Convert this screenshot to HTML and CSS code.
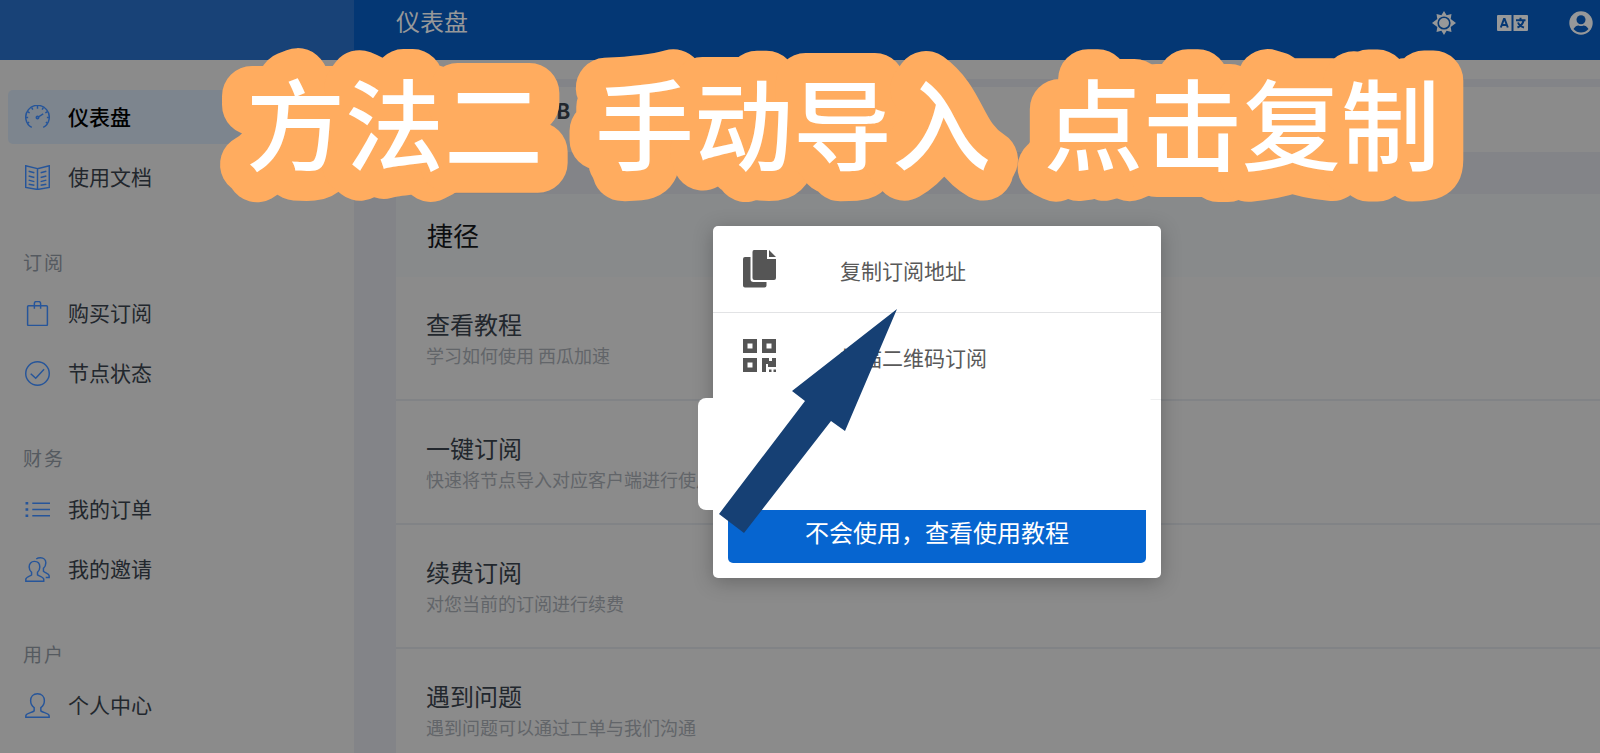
FILE: index.html
```html
<!DOCTYPE html>
<html lang="zh-CN">
<head>
<meta charset="utf-8">
<title>仪表盘</title>
<link rel="stylesheet" href="styles.css">
</head>
<body>
<div class="app">
  <aside class="sidebar">
    <div class="brand"></div>
    <nav class="nav">
      <a class="nav-item active" href="#"><svg class="nav-icon" viewBox="0 0 24 24"><path d="M6.500 21.500A11.300 11.300 0 1 1 17.500 21.500"/><path d="M12 12l5.500-3.500M12 1v2.500M6.500 2.500l1 2M17.500 2.500l-1 2M2.500 6.500l2 1M21.500 6.500l-2 1M1 12h2M23 12h-2M2.500 17.500l1.500-1M21.500 17.500l-1.500-1"/><circle cx="12" cy="12" r="1.200"/></svg><span>仪表盘</span></a>
      <a class="nav-item" href="#"><svg class="nav-icon" viewBox="0 0 24 24"><path d="M12 3.500L.7.700V21.500L12 23.500 23.300 21.500V.7zM12 3.500v20M3.500 6l5.500 1.500M3.500 10.500L9 12M3.500 14.500L9 16M3.500 18.500l5.500 1M20.500 6L15 7.500M20.500 10.500L15 12M20.500 14.500L15 16M20.500 18.500l-5.500 1"/></svg><span>使用文档</span></a>
      <h2 class="nav-heading">订阅</h2>
      <a class="nav-item" href="#"><svg class="nav-icon" viewBox="0 0 24 24"><path d="M3.500 4.500h17q1 0 1 1v17q0 1-1 1h-17q-1 0-1-1v-17q0-1 1-1zM9 7.500V2.500q0-2 2-2h2q2 0 2 2v5"/></svg><span>购买订阅</span></a>
      <a class="nav-item" href="#"><svg class="nav-icon" viewBox="0 0 24 24"><circle cx="12" cy="12" r="11.300"/><path d="M5.500 12.200l4.800 4.300 8-8.500"/></svg><span>节点状态</span></a>
      <h2 class="nav-heading">财务</h2>
      <a class="nav-item" href="#"><svg class="nav-icon" viewBox="0 0 24 24"><path d="M7 6h17M7 12h17M7 18h17"/><path class="solid" d="M.5 4.700h2.600v2.600H.5zM.5 10.700h2.600v2.600H.5zM.5 16.700h2.600v2.600H.5z"/></svg><span>我的订单</span></a>
      <a class="nav-item" href="#"><svg class="nav-icon" viewBox="0 0 24 24"><path d="M9 4.200c3.200 0 5.200 2.200 5.200 5.300 0 2.200-.9 4-2.200 5.200v2.500c1.500 1.200 6 2 6 4.200v1.900H.8v-1.900c0-2.200 4.200-3 5.500-4.200v-2.500C5 13.500 4 11.700 4 9.500c0-3.100 1.900-5.300 5-5.300z"/><path d="M10.800 1.900C12 1 13.200.7 14.800.7c3.200 0 5.200 2.100 5.200 4.900 0 2.300-.9 4.200-2.300 5.300v2.700c1.300 1.600 5.500 2.400 5.500 4.500v1.500h-3.300"/></svg><span>我的邀请</span></a>
      <h2 class="nav-heading">用户</h2>
      <a class="nav-item" href="#"><svg class="nav-icon" viewBox="0 0 24 24"><path d="M12 .7c4 0 6.600 2.700 6.600 6.600 0 2.800-1.200 5.300-3.400 6.700v3.200c2 1.800 8 2.200 8 4.800v1.300H.8V22c0-2.600 6-3 8-4.800V14c-2.200-1.400-3.400-3.900-3.400-6.700C5.400 3.400 8 .7 12 .7z"/></svg><span>个人中心</span></a>
    </nav>
  </aside>
  <div class="page">
    <header class="topbar">
      <h1 class="page-title">仪表盘</h1>
      <div class="tools">
        <button class="tool" aria-label="主题"><svg width="24" height="24" viewBox="0 0 24 24"><path fill="currentColor" d="M12 0l2.600 4.300L19.500 3l-.8 5L24 12l-5.300 4 .8 5-4.900-1.300L12 24l-2.600-4.300L4.500 21l.8-5L0 12l5.300-4-.8-5 4.900 1.300z"/><circle cx="12" cy="12" r="5.800" fill="currentColor" stroke="#043774" stroke-width="1.600"/></svg></button>
        <button class="tool" aria-label="语言"><svg width="31" height="16" viewBox="0 0 31 16"><path fill="currentColor" d="M1 0h13.500v16H1Q0 16 0 15V1Q0 0 1 0zM16.500 0H30q1 0 1 1v14q0 1-1 1H16.500z"/><path fill="none" stroke="#043774" stroke-width="2" d="M3.800 12.500L7 4h.6l3.200 8.500M5 10h4.800M19 5.200h9.500M23.500 2.800v2.500M20.500 12.500c3.500-1.500 5.500-4 6-7M21 7.500c1 2.500 3 4.300 6 5"/></svg></button>
        <button class="tool" aria-label="账户"><svg width="24" height="24" viewBox="0 0 24 24"><circle cx="12" cy="12" r="11.700" fill="currentColor"/><circle cx="12" cy="8.800" r="4.500" fill="#043774"/><path fill="#043774" d="M4.500 18c1.500-2.500 3.300-3.500 5-3.500 1.600.7 3.400.7 5 0 1.700 0 3.500 1 5 3.500-4 4.700-11 4.700-15 0z"/></svg></button>
      </div>
    </header>
    <div class="notice-strip"></div>
    <main class="content">
      <section class="usage"><strong>B</strong></section>
      <section class="card">
        <h2 class="card-title">捷径</h2>
        <a class="row" href="#"><span class="row-title">查看教程</span><span class="row-text">学习如何使用 西瓜加速</span></a>
        <a class="row" href="#"><span class="row-title">一键订阅</span><span class="row-text">快速将节点导入对应客户端进行使用</span></a>
        <a class="row" href="#"><span class="row-title">续费订阅</span><span class="row-text">对您当前的订阅进行续费</span></a>
        <a class="row" href="#"><span class="row-title">遇到问题</span><span class="row-text">遇到问题可以通过工单与我们沟通</span></a>
      </section>
    </main>
  </div>
</div>

<div class="modal" role="dialog" aria-label="一键订阅">
  <button class="option"><svg class="option-icon" viewBox="0 0 33 38"><path d="M11 0h13v9h9v19q0 2-2 2H11.500q-2 0-2-2V2q0-2 1.500-2zM26 0l7 7h-7zM2 7h5.500v22q0 3 3 3h13v3.500q0 2-2 2H2q-2 0-2-2V9q0-2 2-2z"/></svg><span>复制订阅地址</span></button>
  <button class="option"><svg class="option-icon" viewBox="0 0 33 38"><path fill-rule="evenodd" d="M0 2h14v14H0zM4.500 6.500v5h5v-5zM19 2h14v14H19zM23.500 6.500v5h5v-5zM0 21h14v14H0zM4.500 25.500v5h5v-5zM19 21h7v3h3v-3h4v9h-8v-3h-2v8h-4zM26 32.500h2.500V35H26zM30.500 32.500H33V35h-2.500z"/></svg><span>扫描二维码订阅</span></button>
  <div class="cover"></div>
  <button class="tutorial">不会使用，查看使用教程</button>
</div>

<svg class="annotation" viewBox="0 0 1600 753" preserveAspectRatio="xMinYMin meet">
  <path class="arrow" d="M897 309L792 391l13 10L719 514l25 19L831 421l14 10z"/>
  <text class="caption" x="246" y="163">方法二</text>
  <text class="caption" x="595" y="163">手动导入</text>
  <text class="caption" x="1044" y="163">点击复制</text>
</svg>
</body>
</html>
```
FILE: styles.css
```css
* {
  box-sizing: border-box;
}

body {
  margin: 0;
  height: 100vh;
  overflow: hidden;
  background: #838488;
  color: #22272d;
  font-family: "Noto Sans CJK SC", "Noto Sans", sans-serif;
}

h1,
h2 {
  margin: 0;
  font-weight: 400;
}

a {
  color: inherit;
  text-decoration: none;
}

button {
  border: 0;
  padding: 0;
  background: none;
  color: inherit;
  font: inherit;
}

.app {
  display: grid;
  grid-template-columns: 354px 1fr;
  height: 100vh;
}

.sidebar {
  background: #8b8b8b;
  overflow: hidden;
}

.brand {
  height: 60px;
  background: #184277;
}

.nav {
  display: flex;
  flex-direction: column;
  gap: 6px;
  padding: 30px 8px;
}

.nav-item {
  display: flex;
  align-items: center;
  gap: 18px;
  height: 54px;
  padding: 0 17px;
  border-radius: 5px;
  font-size: 21px;
  line-height: 28px;
}

.nav-item span {
  padding-bottom: 2px;
}

.nav-item.active {
  background: #7d858e;
  color: #000;
  font-weight: 500;
}

.nav-icon {
  width: 25px;
  height: 25px;
  fill: none;
  stroke: #26559a;
  stroke-width: 1.4;
}

.nav-icon .solid {
  fill: #26559a;
  stroke: none;
}

.nav-heading {
  height: 30px;
  margin: 38px 15px 0;
  color: #555a60;
  font-size: 19px;
  line-height: 28px;
  letter-spacing: 2px;
}

.nav-heading + .nav-item {
  margin-top: 2px;
}

.page {
  display: flex;
  flex-direction: column;
  min-width: 0;
  overflow: hidden;
}

.topbar {
  display: flex;
  flex: none;
  justify-content: space-between;
  height: 60px;
  padding: 0 7px 0 42px;
  background: #043774;
  color: #979899;
}

.page-title {
  font-size: 24px;
  line-height: 42px;
}

.tools {
  display: flex;
  align-items: center;
  gap: 41px;
  height: 46px;
}

.tool {
  display: flex;
}

.notice-strip {
  flex: none;
  height: 19px;
  background: #8b8b8b;
}

.content {
  padding: 8px 0 0 42px;
}

.usage {
  height: 65px;
  padding: 8px 160px;
  background: #8b8b8b;
  font-size: 21px;
  line-height: 30px;
}

.card {
  margin-top: 42px;
  background: #8b8b8b;
}

.card-title {
  height: 83px;
  padding: 0 31px;
  background: #888a8b;
  color: #0c0e10;
  font-size: 26px;
  line-height: 82px;
}

.row {
  display: flex;
  flex-direction: column;
  height: 124px;
  padding: 29px 30px 0;
  border-bottom: 2px solid #818386;
}

.row-title {
  font-size: 24px;
  line-height: 36px;
}

.row-text {
  color: #626569;
  font-size: 18px;
  line-height: 26px;
}

.modal {
  position: absolute;
  top: 226px;
  left: 713px;
  width: 448px;
  padding-bottom: 15px;
  border-radius: 5px;
  background: #fff;
  box-shadow: 0 4px 20px rgba(0, 0, 0, 0.25);
  color: #595959;
}

.option {
  display: flex;
  align-items: center;
  gap: 64px;
  width: 100%;
  height: 87px;
  padding: 0 30px;
  border-bottom: 1px solid #e2e3e5;
  font-size: 21px;
  line-height: 30px;
}

.option span {
  padding-top: 2px;
}

.option + .option {
  border-bottom-color: #eeeff0;
}

.option-icon {
  width: 33px;
  height: 38px;
  fill: #555;
}

.cover {
  height: 112px;
  margin: -2px 7px 0 -15px;
  border-radius: 8px;
  background: #fff;
}

.tutorial {
  display: block;
  width: 418px;
  height: 53px;
  margin: 0 15px;
  padding-bottom: 9px;
  border-radius: 0 0 5px 5px;
  background: #0665d0;
  color: #fff;
  font-size: 24px;
  line-height: 36px;
}

.annotation {
  position: absolute;
  top: 0;
  left: 0;
  width: 100%;
  pointer-events: none;
}

.arrow {
  fill: #164074;
}

.caption {
  fill: #fff;
  stroke: #ffac5f;
  stroke-width: 60px;
  stroke-linejoin: round;
  paint-order: stroke;
  font-size: 99px;
  font-weight: 500;
}
```
